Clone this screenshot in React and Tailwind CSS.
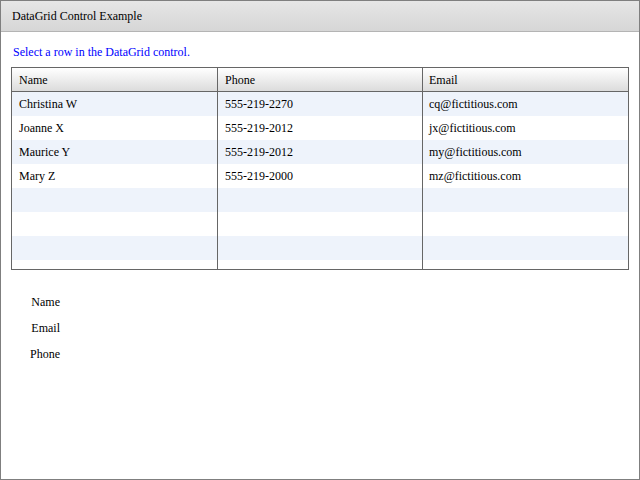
import React from 'react';

const rows = [
    { name: 'Christina W', phone: '555-219-2270', email: 'cq@fictitious.com' },
    { name: 'Joanne X', phone: '555-219-2012', email: 'jx@fictitious.com' },
    { name: 'Maurice Y', phone: '555-219-2012', email: 'my@fictitious.com' },
    { name: 'Mary Z', phone: '555-219-2000', email: 'mz@fictitious.com' },
    {}, {}, {}, {},
];

const App = () => {
    return (
        <div className="w-[640px] h-[480px] border border-[#7f7f7f] bg-white text-[12px] text-black overflow-hidden flex flex-col" style={{ fontFamily: '"Liberation Serif", "Times New Roman", serif' }}>
            <div className="h-[31px] shrink-0 flex items-center px-[11px] bg-gradient-to-b from-[#e6e6e6] to-[#d6d6d6] border-b border-[#b4b4b4]">
                DataGrid Control Example
            </div>
            <div className="px-[10px] pt-[11px]">
                <p className="text-[#0000ff] pl-[2px] h-[18px]">Select a row in the DataGrid control.</p>
                <div className="mt-[6px] h-[203px] border border-[#666] overflow-hidden">
                    <div className="grid grid-cols-[205px_205px_1fr] h-[24px] border-b border-[#666] bg-gradient-to-b from-white to-[#dcdcdc]">
                        <div className="flex items-center pl-[7px]">Name</div>
                        <div className="flex items-center pl-[7px] border-l border-[#666]">Phone</div>
                        <div className="flex items-center pl-[6px] border-l border-[#666]">Email</div>
                    </div>
                    {rows.map((r, i) => (
                        <div key={i} className={`grid grid-cols-[205px_205px_1fr] h-[24px] ${i % 2 === 0 ? 'bg-[#eef3fb]' : 'bg-white'}`}>
                            <div className="flex items-center pl-[7px]">{r.name}</div>
                            <div className="flex items-center pl-[7px] border-l border-[#666]">{r.phone}</div>
                            <div className="flex items-center pl-[6px] border-l border-[#666]">{r.email}</div>
                        </div>
                    ))}
                </div>
            </div>
            <div className="mt-[23px] pl-[20px] flex flex-col gap-[8px]">
                {['Name', 'Email', 'Phone'].map((l) => (
                    <div key={l} className="w-[39px] h-[18px] flex items-center justify-end">{l}</div>
                ))}
            </div>
        </div>
    );
};

export default App;
